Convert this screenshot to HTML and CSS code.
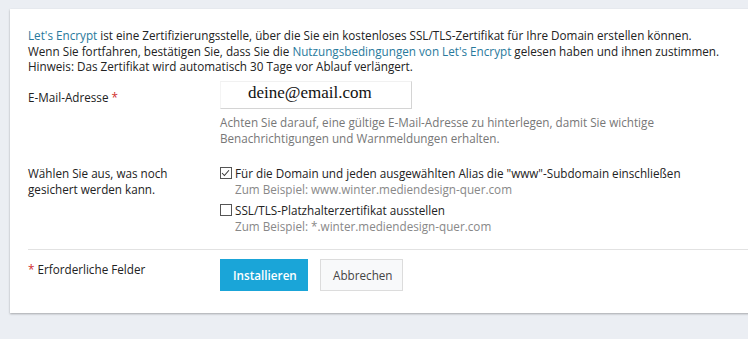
FILE: index.html
```html
<!DOCTYPE html>
<html lang="de">
<head>
<meta charset="utf-8">
<title>Let's Encrypt</title>
<link rel="stylesheet" href="styles.css">
</head>
<body>
<div class="card">
  <p class="intro">
    <a href="#">Let's Encrypt</a> ist eine Zertifizierungsstelle, über die Sie ein kostenloses SSL/TLS-Zertifikat für Ihre Domain erstellen können.<br>
    Wenn Sie fortfahren, bestätigen Sie, dass Sie die <a href="#">Nutzungsbedingungen von Let's Encrypt</a> gelesen haben und ihnen zustimmen.<br>
    Hinweis: Das Zertifikat wird automatisch 30 Tage vor Ablauf verlängert.
  </p>
  <div class="row row-email">
    <div class="label">E-Mail-Adresse <span class="req">*</span></div>
    <div class="field">
      <div class="input">deine@email.com</div>
      <div class="hint">Achten Sie darauf, eine gültige E-Mail-Adresse zu hinterlegen, damit Sie wichtige<br>Benachrichtigungen und Warnmeldungen erhalten.</div>
    </div>
  </div>
  <div class="row row-opts">
    <div class="label">Wählen Sie aus, was noch<br>gesichert werden kann.</div>
    <div class="field">
      <div class="opt">
        <div class="check-line"><span class="box"><svg width="12" height="12" viewBox="0 0 12 12"><path d="M2.2 6 L4.8 8.7 L9.8 3" fill="none" stroke="#333" stroke-width="1.1"/></svg></span>Für die Domain und jeden ausgewählten Alias die "www"-Subdomain einschließen</div>
        <div class="example">Zum Beispiel: www.winter.mediendesign-quer.com</div>
      </div>
      <div class="opt">
        <div class="check-line"><span class="box"></span>SSL/TLS-Platzhalterzertifikat ausstellen</div>
        <div class="example">Zum Beispiel: *.winter.mediendesign-quer.com</div>
      </div>
    </div>
  </div>
  <div class="footer">
    <div class="label"><span class="req">*</span> Erforderliche Felder</div>
    <div class="buttons">
      <button class="btn btn-primary">Installieren</button>
      <button class="btn btn-default">Abbrechen</button>
    </div>
  </div>
</div>
</body>
</html>
```
FILE: styles.css
```css
html, body {
  margin: 0;
  padding: 0;
  background: #ebeef3;
  overflow: hidden;
}
body {
  font-family: "Open Sans", "DejaVu Sans", sans-serif;
  font-size: 11.7px;
  color: #222;
  width: 748px;
  height: 339px;
}
.card {
  margin: 9px 0 0 10px;
  width: 760px;
  height: 304px;
  box-sizing: border-box;
  background: #fff;
  box-shadow: 0 1px 2px rgba(0,0,0,0.3);
  padding: 19px 0 0 18px;
}
.intro {
  margin: 0;
  line-height: 15.5px;
}
.intro a {
  color: #28799c;
  text-decoration: none;
}
.row {
  display: flex;
}
.label {
  width: 192px;
  flex: none;
  line-height: 16px;
}
.req {
  color: #d02d2d;
}
.row-email {
  margin-top: 6px;
}
.row-email .label {
  padding-top: 8px;
}
.input {
  width: 192px;
  height: 28px;
  box-sizing: border-box;
  border: 1px solid #d4d4d4;
  border-top-color: #f1f1f1;
  border-left-color: #f4f4f4;
  font-family: "Liberation Serif", "Times New Roman", serif;
  font-size: 17px;
  color: #111;
  padding-left: 27px;
  line-height: 22px;
}
.hint {
  margin-top: 5px;
  color: #777;
  line-height: 16px;
}
.row-opts {
  margin-top: 19px;
}
.opt + .opt {
  margin-top: 5px;
}
.check-line {
  display: flex;
  align-items: center;
  line-height: 16px;
}
.box {
  flex: none;
  width: 12px;
  height: 12px;
  box-sizing: border-box;
  border: 1px solid #555;
  margin: 0 3px 0 0;
  display: inline-flex;
  background: #fff;
}
.box svg {
  margin: -1px 0 0 -1px;
}
.example {
  color: #888;
  line-height: 16px;
  padding-left: 15px;
}
.footer {
  display: flex;
  border-top: 1px solid #e2e2e2;
  margin-top: 15px;
  padding-top: 9px;
}
.footer .label {
  padding-top: 2px;
}
.buttons {
  display: flex;
  gap: 12px;
}
.btn {
  font-family: "Open Sans", "DejaVu Sans", sans-serif;
  font-size: 11.7px;
  height: 32px;
  padding: 0 12px;
  cursor: pointer;
}
.btn-primary {
  background: #1aa5d8;
  border: 1px solid #1aa5d8;
  color: #fff;
  font-weight: 600;
  width: 88px;
}
.btn-default {
  background: #f8f9fa;
  border: 1px solid #dcdcdc;
  color: #444;
  width: 83px;
}
```
